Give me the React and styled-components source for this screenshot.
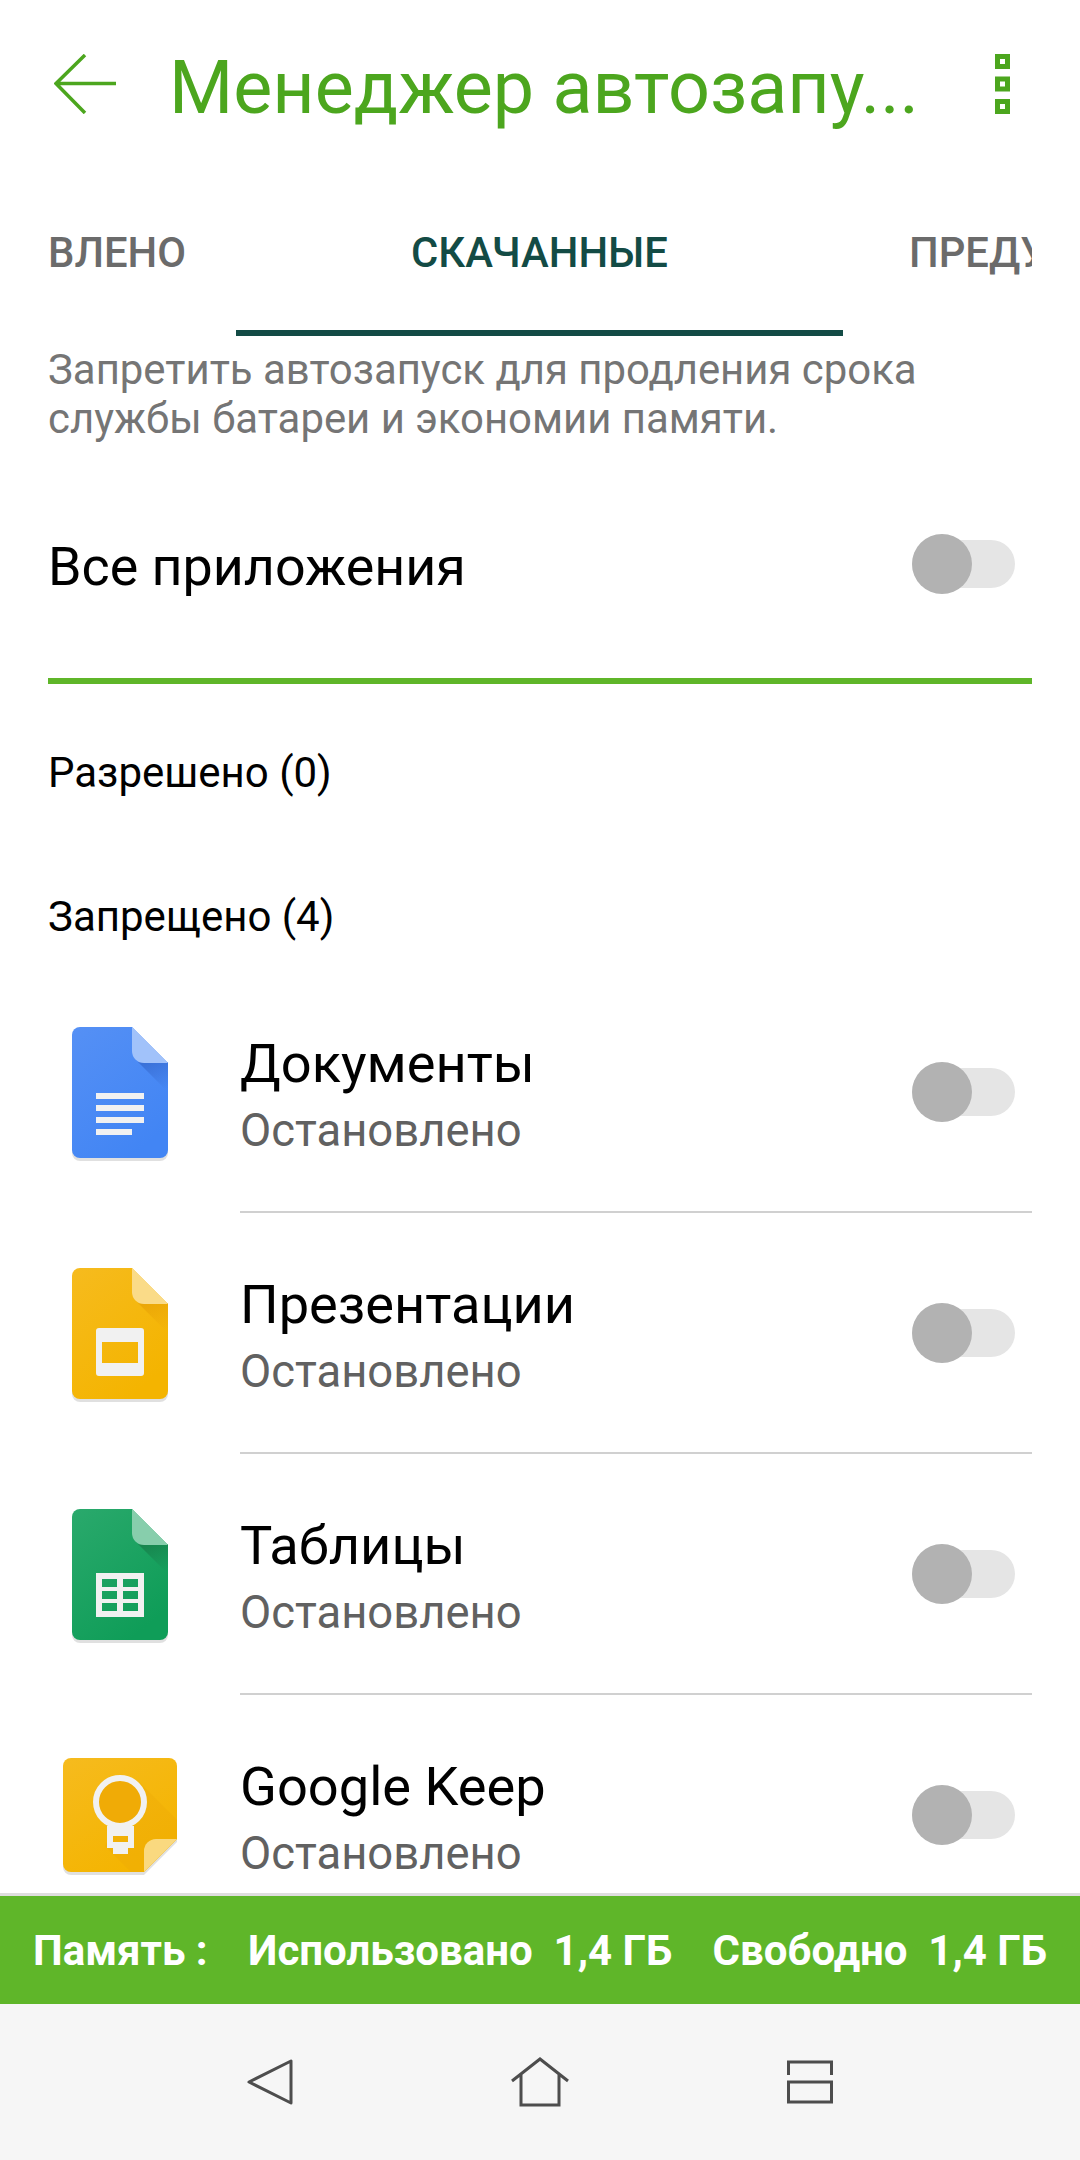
import React from 'react'
import styled, { createGlobalStyle } from 'styled-components'

const Global = createGlobalStyle`
  html, body { margin: 0; padding: 0; background: #fff; }
  * { box-sizing: border-box; }
`

const Page = styled.div`
  width: 1080px;
  height: 2160px;
  display: flex;
  flex-direction: column;
  overflow: hidden;
  font-family: Roboto, "Noto Sans", sans-serif;
  background: #fff;
`

const Header = styled.header`
  height: 168px;
  flex: none;
  display: flex;
  align-items: center;
  padding-left: 54px;
`

const Title = styled.h1`
  margin: 8px 0 0 53px;
  width: 761px;
  font-size: 73.6px;
  font-weight: 400;
  color: #4ca61e;
  white-space: nowrap;
`

const MenuIcon = styled.svg`
  margin-left: 65px;
  flex: none;
`

const Tabs = styled.div`
  height: 168px;
  flex: none;
  margin: 0 48px;
  display: flex;
  overflow: hidden;
`

const Tab = styled.div`
  flex: none;
  width: ${p => p.width}px;
  padding-left: ${p => p.pad}px;
  display: flex;
  align-items: center;
  height: 168px;
  padding-top: 6px;
  justify-content: ${p => (p.active ? 'center' : 'flex-start')};
  font-size: 41.8px;
  font-weight: 500;
  white-space: nowrap;
  color: ${p => (p.active ? '#134b45' : '#6b6b6b')};
  border-bottom: 6px solid ${p => (p.active ? '#134b45' : 'transparent')};
`

const Description = styled.p`
  margin: 9px 48px 0;
  font-size: 41.9px;
  line-height: 49px;
  white-space: nowrap;
  color: #757575;
`

const AllRow = styled.div`
  height: 241px;
  flex: none;
  margin: 0 48px;
  display: flex;
  align-items: center;
  justify-content: space-between;
  padding: 6px 17px 0 0;
  border-bottom: 6px solid #5fb629;
`

const AllLabel = styled.span`
  margin-top: 5px;
  font-size: 53.8px;
  color: #000;
`

const SectionLabel = styled.div`
  height: ${p => p.height}px;
  flex: none;
  margin-left: 48px;
  display: flex;
  align-items: center;
  font-size: 42px;
  color: #000;
`

const List = styled.div`
  flex: 1;
  min-height: 0;
  overflow: hidden;
`

const Row = styled.div`
  height: 241px;
  display: flex;
  align-items: center;
`

const IconCell = styled.div`
  width: 240px;
  flex: none;
  display: flex;
  justify-content: center;
  padding-top: 4px;
`

const RowBody = styled.div`
  flex: 1;
  height: 100%;
  margin-right: 48px;
  padding-right: 17px;
  display: flex;
  align-items: center;
  justify-content: space-between;
  border-bottom: 2px solid #d0d0d0;
`

const RowText = styled.div`
  padding-top: 6px;
`

const RowName = styled.div`
  font-size: 54.2px;
  line-height: 60px;
  color: #000;
`

const RowStatus = styled.div`
  margin-top: 12px;
  font-size: 45.4px;
  line-height: 50px;
  color: #616161;
`

const SwitchBox = styled.div`
  position: relative;
  width: 103px;
  height: 60px;
  flex: none;
  display: flex;
  align-items: center;
`

const Track = styled.div`
  width: 100%;
  height: 48px;
  border-radius: 24px;
  background: #e5e5e5;
`

const Knob = styled.div`
  position: absolute;
  left: 0;
  top: 0;
  width: 60px;
  height: 60px;
  border-radius: 50%;
  background: #b2b2b2;
`

const MemoryBar = styled.div`
  height: 111px;
  flex: none;
  display: flex;
  align-items: center;
  justify-content: space-between;
  padding: 0 33px 0 33px;
  background: #5fb629;
  border-top: 3px solid #dedede;
  color: #fff;
  font-size: 42px;
  font-weight: 700;
  white-space: pre;
`

const NavBar = styled.nav`
  height: 156px;
  flex: none;
  background: #f6f6f6;
  display: flex;
  align-items: center;
  justify-content: center;
  gap: 218px;
`

const Switch = () => (
  <SwitchBox>
    <Track />
    <Knob />
  </SwitchBox>
)

const PaperIcon = ({ id, top, bottom, fold, shade, children }) => (
  <svg width="100" height="136" viewBox="-2 0 100 136">
    <defs>
      <linearGradient id={id} x1="0" y1="0" x2="0.6" y2="1">
        <stop offset="0" stopColor={top} />
        <stop offset="1" stopColor={bottom} />
      </linearGradient>
      <linearGradient id={`${id}-shade`} x1="0.3" y1="0" x2="0.7" y2="1">
        <stop offset="0" stopColor={shade} stopOpacity="1" />
        <stop offset="1" stopColor={shade} stopOpacity="0" />
      </linearGradient>
    </defs>
    <path d="M8 3H60L96 39V126a8 8 0 0 1-8 8H8a8 8 0 0 1-8-8V11a8 8 0 0 1 8-8Z" fill="#000" opacity=".12" />
    <path d="M8 0H60L96 36V123a8 8 0 0 1-8 8H8a8 8 0 0 1-8-8V8a8 8 0 0 1 8-8Z" fill={`url(#${id})`} />
    <path d="M66 35H96V65Z" fill={`url(#${id}-shade)`} />
    <path d="M60 0L96 36H72a12 12 0 0 1-12-12Z" fill={fold} />
    {children}
  </svg>
)

const DocsIcon = () => (
  <PaperIcon id="docs" top="#5590f5" bottom="#4285f4" fold="#a1c2fa" shade="#3a71d8">
    <path d="M24 66H72V72H24ZM24 78H72V84H24ZM24 90H72V96H24ZM24 102H60V108H24Z" fill="#f1f1f1" />
  </PaperIcon>
)

const SlidesIcon = () => (
  <PaperIcon id="slides" top="#f6bb1e" bottom="#f4b400" fold="#fadb88" shade="#eba707">
    <path fillRule="evenodd" d="M27 60H69a3 3 0 0 1 3 3V105a3 3 0 0 1-3 3H27a3 3 0 0 1-3-3V63a3 3 0 0 1 3-3ZM30 74V95H66V74Z" fill="#f1f1f1" />
  </PaperIcon>
)

const SheetsIcon = () => (
  <PaperIcon id="sheets" top="#2aa96c" bottom="#0f9d58" fold="#87ceac" shade="#17854e">
    <path fillRule="evenodd" d="M24 64H72V108H24ZM30 70V78H45V70ZM51 70V78H66V70ZM30 82V90H45V82ZM51 82V90H66V82ZM30 94V102H45V94ZM51 94V102H66V94Z" fill="#f1f1f1" />
  </PaperIcon>
)

const KeepIcon = () => (
  <svg width="118" height="120" viewBox="-2 0 118 120">
    <defs>
      <linearGradient id="keep" x1="0" y1="0" x2="0.6" y2="1">
        <stop offset="0" stopColor="#f6bb1e" />
        <stop offset="1" stopColor="#f4b400" />
      </linearGradient>
    </defs>
    <path d="M8 3H106a8 8 0 0 1 8 8V84L81 117H8a8 8 0 0 1-8-8V11a8 8 0 0 1 8-8Z" fill="#000" opacity=".12" />
    <path d="M8 0H106a8 8 0 0 1 8 8V81L81 114H8a8 8 0 0 1-8-8V8a8 8 0 0 1 8-8Z" fill="url(#keep)" />
    <path d="M76 24L114 62V81L81 114H68L42 88Z" fill="#eeaa08" opacity=".4" />
    <circle cx="57" cy="44" r="24" fill="#f0ab06" stroke="#f1f1f1" strokeWidth="6" />
    <path fillRule="evenodd" d="M44 68H71V90H65V96H50V90H44ZM50 78V84H65V78Z" fill="#f1f1f1" />
    <path d="M114 81L81 114V93a12 12 0 0 1 12-12Z" fill="#fad97f" />
  </svg>
)

const apps = [
  { name: 'Документы', icon: <DocsIcon /> },
  { name: 'Презентации', icon: <SlidesIcon /> },
  { name: 'Таблицы', icon: <SheetsIcon /> },
  { name: 'Google Keep', icon: <KeepIcon /> },
]

export default function App() {
  return (
    <Page>
      <Global />
      <Header>
        <svg width="62" height="60" viewBox="0 0 62 60" fill="none" stroke="#4ca61e" strokeWidth="3.5">
          <path d="M62 29.5H2M31 1L2 29.5L31 59" />
        </svg>
        <Title>Менеджер автозапу...</Title>
        <MenuIcon width="15" height="60" viewBox="0 0 15 60" fill="none" stroke="#4ca61e" strokeWidth="5">
          <rect x="2.5" y="2.5" width="10" height="10" />
          <rect x="2.5" y="25" width="10" height="10" />
          <rect x="2.5" y="47.5" width="10" height="10" />
        </MenuIcon>
      </Header>
      <Tabs>
        <Tab width={188} pad={0}>ВЛЕНО</Tab>
        <Tab width={607} pad={0} active>СКАЧАННЫЕ</Tab>
        <Tab width={400} pad={66}>ПРЕДУСТАНОВЛЕННЫЕ</Tab>
      </Tabs>
      <Description>
        Запретить автозапуск для продления срока<br />
        службы батареи и экономии памяти.
      </Description>
      <AllRow>
        <AllLabel>Все приложения</AllLabel>
        <Switch />
      </AllRow>
      <SectionLabel height={176}>Разрешено (0)</SectionLabel>
      <SectionLabel height={112}>Запрещено (4)</SectionLabel>
      <List>
        {apps.map(app => (
          <Row key={app.name}>
            <IconCell>{app.icon}</IconCell>
            <RowBody>
              <RowText>
                <RowName>{app.name}</RowName>
                <RowStatus>Остановлено</RowStatus>
              </RowText>
              <Switch />
            </RowBody>
          </Row>
        ))}
      </List>
      <MemoryBar>
        <span>Память :</span>
        <span>Использовано  1,4 ГБ</span>
        <span>Свободно  1,4 ГБ</span>
      </MemoryBar>
      <NavBar>
        <svg width="46" height="46" viewBox="0 0 46 46" fill="none" stroke="#4d4d4d" strokeWidth="3" strokeLinejoin="round">
          <path d="M44 2V44L2 23Z" />
        </svg>
        <svg width="58" height="50" viewBox="0 0 58 50" fill="none" stroke="#4d4d4d" strokeWidth="3">
          <path d="M1 24L29 2L57 24M10 17V48H48V17" />
        </svg>
        <svg width="46" height="44" viewBox="0 0 46 44" fill="none" stroke="#4d4d4d" strokeWidth="3">
          <path d="M1.5 15V2H44.5V15M1.5 22H44.5V42H1.5Z" />
        </svg>
      </NavBar>
    </Page>
  )
}
